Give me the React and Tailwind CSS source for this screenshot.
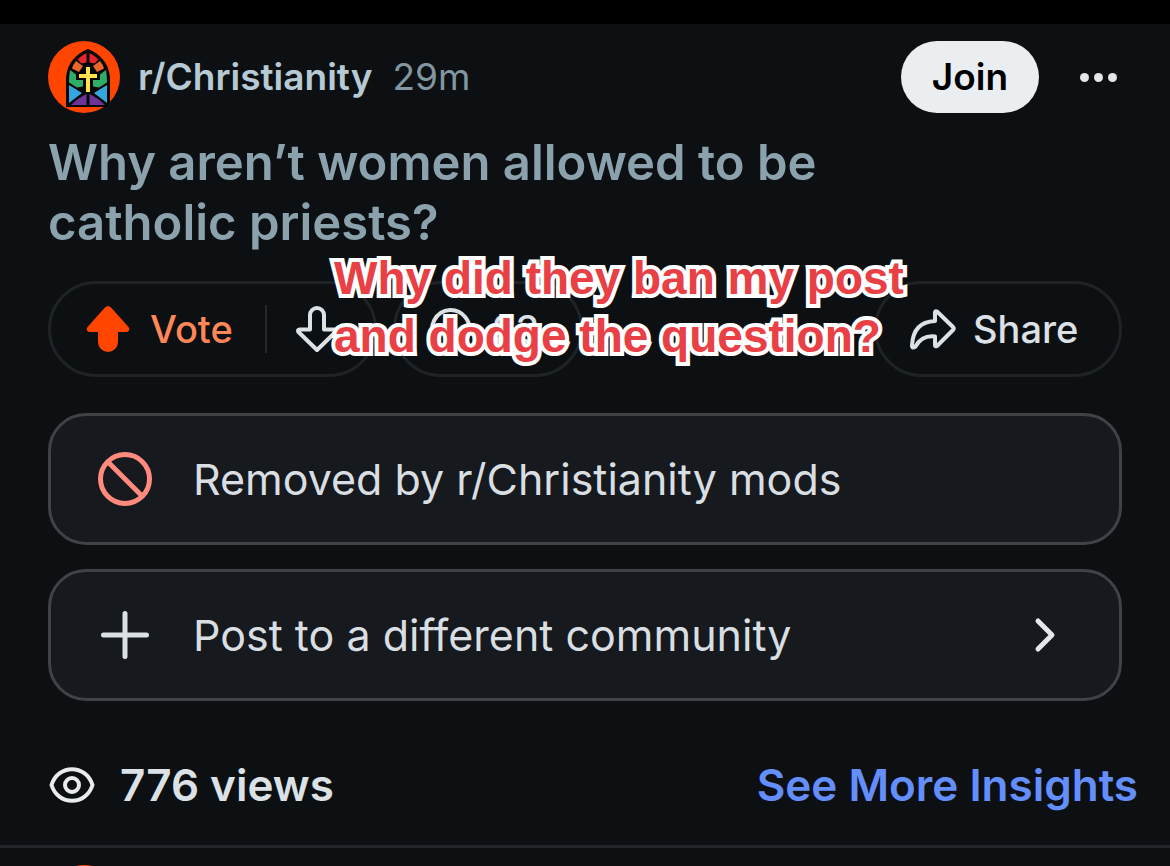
import React from "react";

function Avatar() {
  return (
    <svg viewBox="0 0 72 72" className="size-18 shrink-0" aria-hidden="true">
      <circle cx="36" cy="36" r="36" fill="#ff4500" />
      <path d="M18 66V37C19 22 28 13 40 8c12 5 21 14 22 29v24l-4 5z" fill="#060606" />
      <path d="M38.500 12v9.500l-5 1-4-4q4-4 9-6.500z" fill="#e5252d" />
      <path d="M41.500 12v9.500l5 1 4-4q-4-4-9-6.500z" fill="#e5252d" />
      <path d="M28 20l7 5-4 6-7-3.500q1-4 4-7.500z" fill="#e8672c" />
      <path d="M52 20l-7 5 4 6 7-3.500q-1-4-4-7.500z" fill="#e8672c" />
      <path d="M22 29l6 4.500v5.500h7v6.500l-6 1-8-5q0-7 1-12.500z" fill="#2fae6a" />
      <path d="M58 29l-6 4.500v5.500h-7v6.500l6 1 8-5q0-7-1-12.500z" fill="#2fae6a" />
      <path d="M21 44l13 8-13 10z" fill="#35a5e0" />
      <path d="M59 44l-13 8 13 10z" fill="#35a5e0" />
      <path d="M38.500 53v11H23q7-7 15.500-11z" fill="#6b3496" />
      <path d="M41.500 53v11H57q-7-7-15.500-11z" fill="#6b3496" />
      <path d="M38 26h4v7h7v4h-7v14h-4V37h-7v-4h7z" fill="#ffe04d" stroke="#060606" strokeWidth="1.500" paintOrder="stroke" />
    </svg>
  );
}

function UpArrow() {
  return (
    <svg viewBox="0 0 44 48" className="h-12 w-11 shrink-0" aria-hidden="true">
      <path d="M22 1q1.500 0 3 1.500L42.500 22q1.500 2 .5 3.500-1 1.500-3 1.500H32v10a10 10 0 0 1-20 0V27H4q-2 0-3-1.500T1.500 22L19 2.500Q20.500 1 22 1z" fill="#ff4500" />
    </svg>
  );
}

function DownArrow() {
  return (
    <svg viewBox="0 0 44 48" className="h-12 w-11 shrink-0" fill="none" stroke="#dce1e5" strokeWidth="4" strokeLinejoin="round" aria-hidden="true">
      <path d="M22 45L3.500 27q-1.500-2 1-2.500H15V10a7 7 0 0 1 14 0v14.500h10.500q2.500.5 1 2.500z" />
    </svg>
  );
}

function ShareArrow() {
  return (
    <svg viewBox="0 0 48 44" className="h-11 w-12 shrink-0" fill="none" stroke="#dce1e5" strokeWidth="4" strokeLinejoin="round" aria-hidden="true">
      <path d="M26 5.500q0-2 2-1L44 20q1.500 1.500 0 3L28 39q-2 1-2-1v-8.500Q13 28 6.500 39.500 3 42 3 38.500 4 15 26 14z" />
    </svg>
  );
}

const pill = "flex h-24 items-center rounded-full border-3 border-[#1f2326]";
const card = "flex h-33 w-full items-center rounded-[38px] border-3 border-[#3f4346] bg-[#16191d] pl-[46px] pr-15 text-left text-[43px] text-[#d9dee2]";

export default function App() {
  return (
    <div className="min-h-screen overflow-hidden bg-[#0c1013] font-['Inter',sans-serif]">
      <div className="h-6 bg-black" />

      <article className="px-12 pt-[17px]">
        <header className="flex items-center">
          <Avatar />
          <a href="#community" className="ml-[18px] text-[37px] font-semibold text-[#b7cad4]">r/Christianity</a>
          <span className="ml-5 text-[37px] text-[#8296a0]">29m</span>
          <button className="ml-auto h-18 w-[138px] rounded-full bg-[#eaeef1] text-[37px] font-semibold text-black">Join</button>
          <button aria-label="More options" className="ml-10 mr-1 flex gap-[5px] px-[1px]">
            <span className="size-[9px] rounded-full bg-[#e4e6e8]" />
            <span className="size-[9px] rounded-full bg-[#e4e6e8]" />
            <span className="size-[9px] rounded-full bg-[#e4e6e8]" />
          </button>
        </header>

        <h1 className="mt-5 max-w-[840px] text-[49px] leading-[60px] font-semibold text-[#8ba2ad]">
          Why aren’t women allowed to be catholic priests?
        </h1>

        <div className="relative mt-7 flex gap-4">
          <div className={`${pill} w-[329px] pl-[35px]`}>
            <button className="flex items-center gap-5 text-[38px] font-medium text-[#ff8656]">
              <UpArrow />
              Vote
            </button>
            <span className="mr-7 ml-8 h-12 w-[2px] bg-[#26292c]" />
            <button aria-label="Downvote">
              <DownArrow />
            </button>
          </div>
          <button className={`${pill} w-[190px] gap-5 pl-8 text-[38px] font-medium text-[#dce1e5]`}>
            <svg viewBox="0 0 44 44" className="size-11" fill="none" stroke="#dce1e5" strokeWidth="4" aria-hidden="true">
              <path d="M22 3a19 19 0 1 1-8 36l-10 2 3-9A19 19 0 0 1 22 3z" strokeLinejoin="round" />
            </svg>
            23
          </button>
          <button className={`${pill} ml-auto w-[248px] gap-4 pl-8 text-[38px] font-medium text-[#dce1e5]`}>
            <ShareArrow />
            Share
          </button>

          <p className="pointer-events-none absolute -top-8 left-[286px] text-[46px] leading-[58px] font-bold whitespace-nowrap text-[#e84045] [paint-order:stroke_fill] [-webkit-text-stroke:8px_white] [stroke-linejoin:round] font-['Liberation_Sans',sans-serif]">
            Why did they ban my post
            <br />
            and dodge the question?
          </p>
        </div>

        <div className="mt-9 flex flex-col gap-6">
          <div className={card}>
            <svg viewBox="0 0 56 56" className="mr-10 size-14" fill="none" stroke="#ff8a7d" strokeWidth="5" aria-hidden="true">
              <circle cx="28" cy="28" r="24.500" />
              <path d="M11 11l34 34" />
            </svg>
            Removed by r/Christianity mods
          </div>
          <button className={card}>
            <svg viewBox="0 0 56 56" className="mr-10 size-14" fill="none" stroke="#dce1e5" strokeWidth="5" strokeLinecap="round" aria-hidden="true">
              <path d="M28 6.500v43M6.500 28h43" />
            </svg>
            Post to a different community
            <svg viewBox="0 0 32 40" className="ml-auto h-10 w-8" fill="none" stroke="#e4e8eb" strokeWidth="5" strokeLinecap="round" strokeLinejoin="round" aria-hidden="true">
              <path d="M11 6l14 14-14 14" />
            </svg>
          </button>
        </div>
      </article>

      <footer className="flex h-[147px] items-center border-b-3 border-[#22262a] pt-6 pr-8 pl-12 text-[44px] font-semibold text-[#dce1e5]">
        <svg viewBox="0 0 48 48" className="mr-6 size-12" fill="none" stroke="#e8ecee" strokeWidth="4" aria-hidden="true">
          <path d="M3.500 24C10 3 38 3 44.500 24 38 45 10 45 3.500 24z" strokeLinejoin="round" />
          <circle cx="24" cy="24" r="7" />
        </svg>
        776 views
        <a href="#insights" className="ml-auto text-[#648efc]">See More Insights</a>
      </footer>

      {/* top edge of the next post */}
      <div className="h-[18px] overflow-hidden pt-[17px] pl-12">
        <Avatar />
      </div>
    </div>
  );
}
